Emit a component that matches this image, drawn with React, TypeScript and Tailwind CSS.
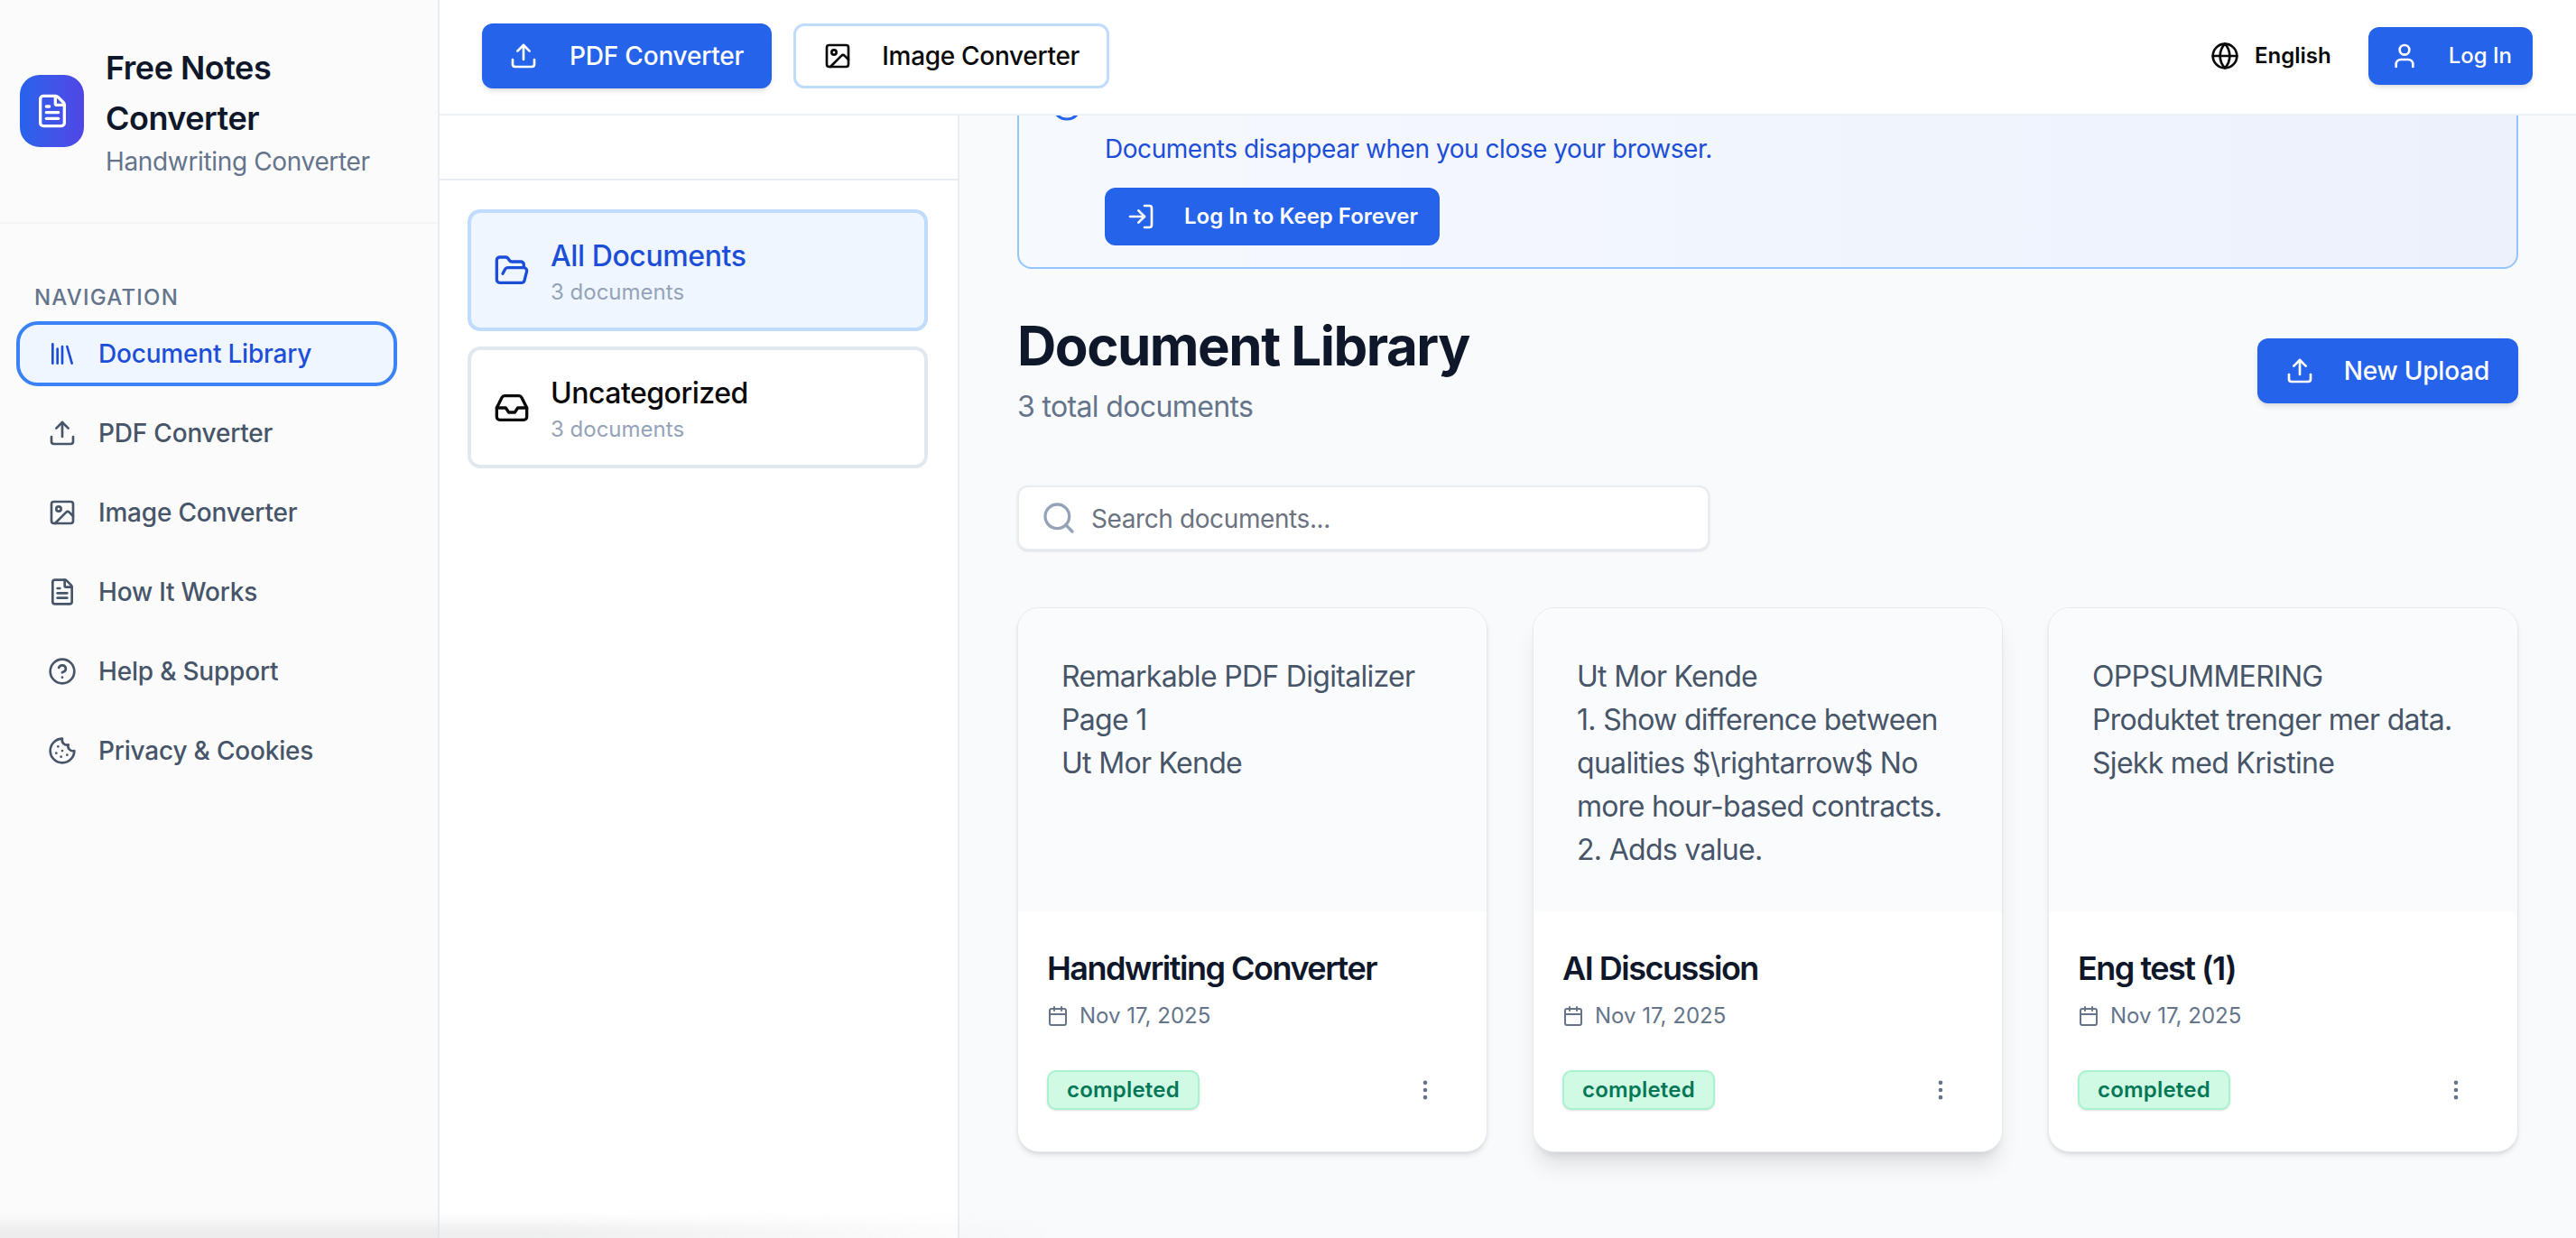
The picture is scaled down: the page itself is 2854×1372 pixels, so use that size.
import {
  Calendar,
  CircleHelp,
  Cookie,
  EllipsisVertical,
  FileText,
  FolderOpen,
  Globe,
  Image as ImageIcon,
  Inbox,
  Info,
  Library,
  LogIn,
  Search,
  Upload,
  User,
} from "lucide-react";

const navItems = [
  { label: "PDF Converter", icon: Upload },
  { label: "Image Converter", icon: ImageIcon },
  { label: "How It Works", icon: FileText },
  { label: "Help & Support", icon: CircleHelp },
  { label: "Privacy & Cookies", icon: Cookie },
];

const documents = [
  {
    title: "Handwriting Converter",
    preview: ["Remarkable PDF Digitalizer", "Page 1", "Ut Mor Kende"],
    hovered: false,
  },
  {
    title: "AI Discussion",
    preview: [
      "Ut Mor Kende",
      "1. Show difference between",
      "qualities $\\rightarrow$ No",
      "more hour-based contracts.",
      "2. Adds value.",
    ],
    hovered: true,
  },
  {
    title: "Eng test (1)",
    preview: ["OPPSUMMERING", "Produktet trenger mer data.", "Sjekk med Kristine"],
    hovered: false,
  },
];

function Sidebar() {
  return (
    <aside className="w-[487px] shrink-0 bg-[#fbfbfc] border-r-2 border-[#e8edf3]">
      <div className="h-[248px] flex items-center gap-[24px] pl-[22px] border-b-2 border-[#f3f4f6]">
        <div className="w-[71px] h-[80px] shrink-0 rounded-[22px] bg-gradient-to-r from-[#2563eb] to-[#4f46e5] flex items-center justify-center">
          <FileText className="w-[40px] h-[40px] text-white" />
        </div>
        <div>
          <h1 className="text-[36px] leading-[56px] font-semibold tracking-[-0.5px] text-[#0f172a]">
            Free Notes
            <br />
            Converter
          </h1>
          <p className="text-[28px] leading-[40px] tracking-[-0.35px] text-[#64748b]">Handwriting Converter</p>
        </div>
      </div>

      <div className="pt-[66px] pl-[18px] pr-[45px]">
        <div className="pl-[20px] mb-[10px] text-[24px] leading-[32px] font-medium tracking-wider text-[#64748b]">
          NAVIGATION
        </div>
        <nav className="flex flex-col gap-[16px]">
          <a className="h-[72px] flex items-center gap-[24px] pl-[31px] rounded-[24px] border-4 border-[#3b82f6] bg-[#f0f6ff] text-[28px] font-medium tracking-[-0.2px] text-[#1d4ed8]">
            <Library className="w-[32px] h-[32px]" />
            Document Library
          </a>
          {navItems.map((item) => (
            <a
              key={item.label}
              className="h-[72px] flex items-center gap-[24px] pl-[35px] text-[28px] font-medium tracking-[-0.2px] text-[#475569]"
            >
              <item.icon className="w-[32px] h-[32px]" />
              {item.label}
            </a>
          ))}
        </nav>
      </div>
    </aside>
  );
}

function TopBar() {
  return (
    <header className="relative z-10 h-[128px] shrink-0 bg-white border-b-2 border-[#eef1f6] flex items-center justify-between pl-[47px] pr-[48px]">
      <div className="flex items-center gap-[24px] -mt-[2px]">
        <button className="h-[72px] flex items-center gap-[35px] pl-[30px] pr-[31px] rounded-[12px] bg-[#2563eb] text-[28px] font-medium tracking-[-0.2px] text-white shadow-md">
          <Upload className="w-[32px] h-[32px]" />
          PDF Converter
        </button>
        <button className="h-[72px] flex items-center gap-[33px] pl-[30px] pr-[30px] rounded-[12px] border-[3px] border-[#bfdbfe] bg-white text-[28px] font-medium tracking-[-0.3px] text-[#0a0a0a]">
          <ImageIcon className="w-[32px] h-[32px]" />
          Image Converter
        </button>
      </div>
      <div className="flex items-center gap-[41px] -mt-[2px]">
        <div className="flex items-center gap-[17px] text-[24px] font-semibold text-[#0a0a0a]">
          <Globe className="w-[32px] h-[32px]" />
          English
        </div>
        <button className="h-[64px] flex items-center gap-[33px] pl-[24px] pr-[23px] rounded-[12px] bg-[#2563eb] text-[24px] font-medium text-white shadow-md">
          <User className="w-[32px] h-[32px]" />
          Log In
        </button>
      </div>
    </header>
  );
}

function Folders() {
  return (
    <section className="w-[576px] shrink-0 bg-white border-r-2 border-[#e8edf3]">
      <div className="h-[72px] border-b-2 border-[#e8edf3]" />
      <div className="pt-[32px] pl-[31px] pr-[33px] flex flex-col gap-[17px]">
        <div className="h-[135px] flex items-center gap-[23px] pl-[25px] rounded-[14px] border-4 border-[#bfdbfe] bg-[#eff6ff]">
          <FolderOpen className="w-[40px] h-[40px] text-[#1d4ed8]" />
          <div className="pt-[2px]">
            <div className="text-[32px] leading-[46px] font-medium tracking-[-0.4px] text-[#1d4ed8]">All Documents</div>
            <div className="text-[24px] leading-[34px] text-[#94a3b8]">3 documents</div>
          </div>
        </div>
        <div className="h-[135px] flex items-center gap-[23px] pl-[25px] rounded-[14px] border-4 border-[#e2e8f0] bg-white">
          <Inbox className="w-[40px] h-[40px] text-[#0a0a0a]" />
          <div className="pt-[2px]">
            <div className="text-[32px] leading-[46px] font-medium tracking-[-0.5px] text-[#0a0a0a]">Uncategorized</div>
            <div className="text-[24px] leading-[34px] text-[#94a3b8]">3 documents</div>
          </div>
        </div>
      </div>
    </section>
  );
}

function DocumentCard({ doc }: { doc: (typeof documents)[0] }) {
  return (
    <div
      className={`h-[604px] rounded-[24px] overflow-hidden bg-white border border-[#e6eaf0] ${
        doc.hovered ? "shadow-xl" : "shadow-md"
      }`}
    >
      <div className="h-[337px] bg-[#fafbfd] pt-[52px] pl-[48px] text-[32px] leading-[48px] tracking-[-0.7px] text-[#475569]">
        {doc.preview.map((line) => (
          <div key={line}>{line}</div>
        ))}
      </div>
      <div className="pt-[38px] pl-[32px] pr-[54px]">
        <h3 className="text-[36px] leading-[48px] font-semibold text-[#0f172a] tracking-[-1.5px]">{doc.title}</h3>
        <div className="mt-[13px] flex items-center gap-[12px] text-[24px] leading-[32px] text-[#64748b]">
          <Calendar className="w-[24px] h-[24px]" />
          Nov 17, 2025
        </div>
        <div className="mt-[44px] flex items-center justify-between">
          <span className="h-[44px] px-[20px] flex items-center rounded-[10px] border-2 border-[#a7f3d0] bg-[#d1fae5] text-[24px] font-semibold tracking-[0.2px] text-[#047857] shadow-sm">
            completed
          </span>
          <EllipsisVertical className="w-[28px] h-[28px] text-[#64748b]" />
        </div>
      </div>
    </div>
  );
}

function DocumentLibrary() {
  return (
    <main className="flex-1 min-w-0 overflow-hidden bg-[#f9fafc] pl-[64px] pr-[64px]">
      <div className="-mt-[60px] pt-[29px] pb-[24px] pl-[35px] rounded-[16px] border-2 border-[#93c5fd] bg-gradient-to-r from-[#f6f9fe] to-[#ecf1fc] flex gap-[24px]">
        <Info className="w-[36px] h-[36px] text-[#2563eb]" />
        <div>
          <div className="h-[46px]" />
          <p className="text-[28px] leading-[40px] tracking-[-0.45px] text-[#1d4ed8]">
            Documents disappear when you close your browser.
          </p>
          <button className="mt-[23px] h-[64px] flex items-center gap-[32px] pl-[24px] pr-[24px] rounded-[12px] bg-[#2563eb] text-[24px] font-semibold text-white">
            <LogIn className="w-[32px] h-[32px]" />
            Log In to Keep Forever
          </button>
        </div>
      </div>

      <div className="mt-[49px] flex items-center justify-between">
        <div>
          <h2 className="text-[60px] leading-[72px] font-bold tracking-[-1.5px] text-[#0f172a]">Document Library</h2>
          <p className="mt-[8px] text-[32px] leading-[48px] tracking-[-0.64px] text-[#64748b]">3 total documents</p>
        </div>
        <button className="h-[72px] flex items-center gap-[33px] pl-[31px] pr-[32px] rounded-[12px] bg-[#2563eb] text-[28px] font-medium tracking-[-0.2px] text-white shadow-md">
          <Upload className="w-[32px] h-[32px]" />
          New Upload
        </button>
      </div>

      <div className="mt-[63px] w-[767px] h-[72px] flex items-center gap-[16px] pl-[24px] rounded-[12px] border-2 border-[#e8edf3] bg-white shadow-sm">
        <Search className="w-[40px] h-[40px] text-[#94a3b8]" />
        <span className="pt-[2px] text-[28px] tracking-[-0.4px] text-[#6b7280]">Search documents...</span>
      </div>

      <div className="mt-[63px] grid grid-cols-3 gap-[50px]">
        {documents.map((doc) => (
          <DocumentCard key={doc.title} doc={doc} />
        ))}
      </div>
    </main>
  );
}

export default function App() {
  return (
    <div className="relative w-[2854px] h-[1372px] flex overflow-hidden font-['Inter',sans-serif]">
      <Sidebar />
      <div className="flex-1 min-w-0 flex flex-col">
        <TopBar />
        <div className="flex-1 min-h-0 flex">
          <Folders />
          <DocumentLibrary />
        </div>
      </div>
      <div className="absolute -left-[20px] -bottom-[8px] w-[1200px] h-[24px] bg-gradient-to-r from-[#dfe0e1] via-[#dfe0e1] to-transparent opacity-60 blur-[8px]" />
    </div>
  );
}
